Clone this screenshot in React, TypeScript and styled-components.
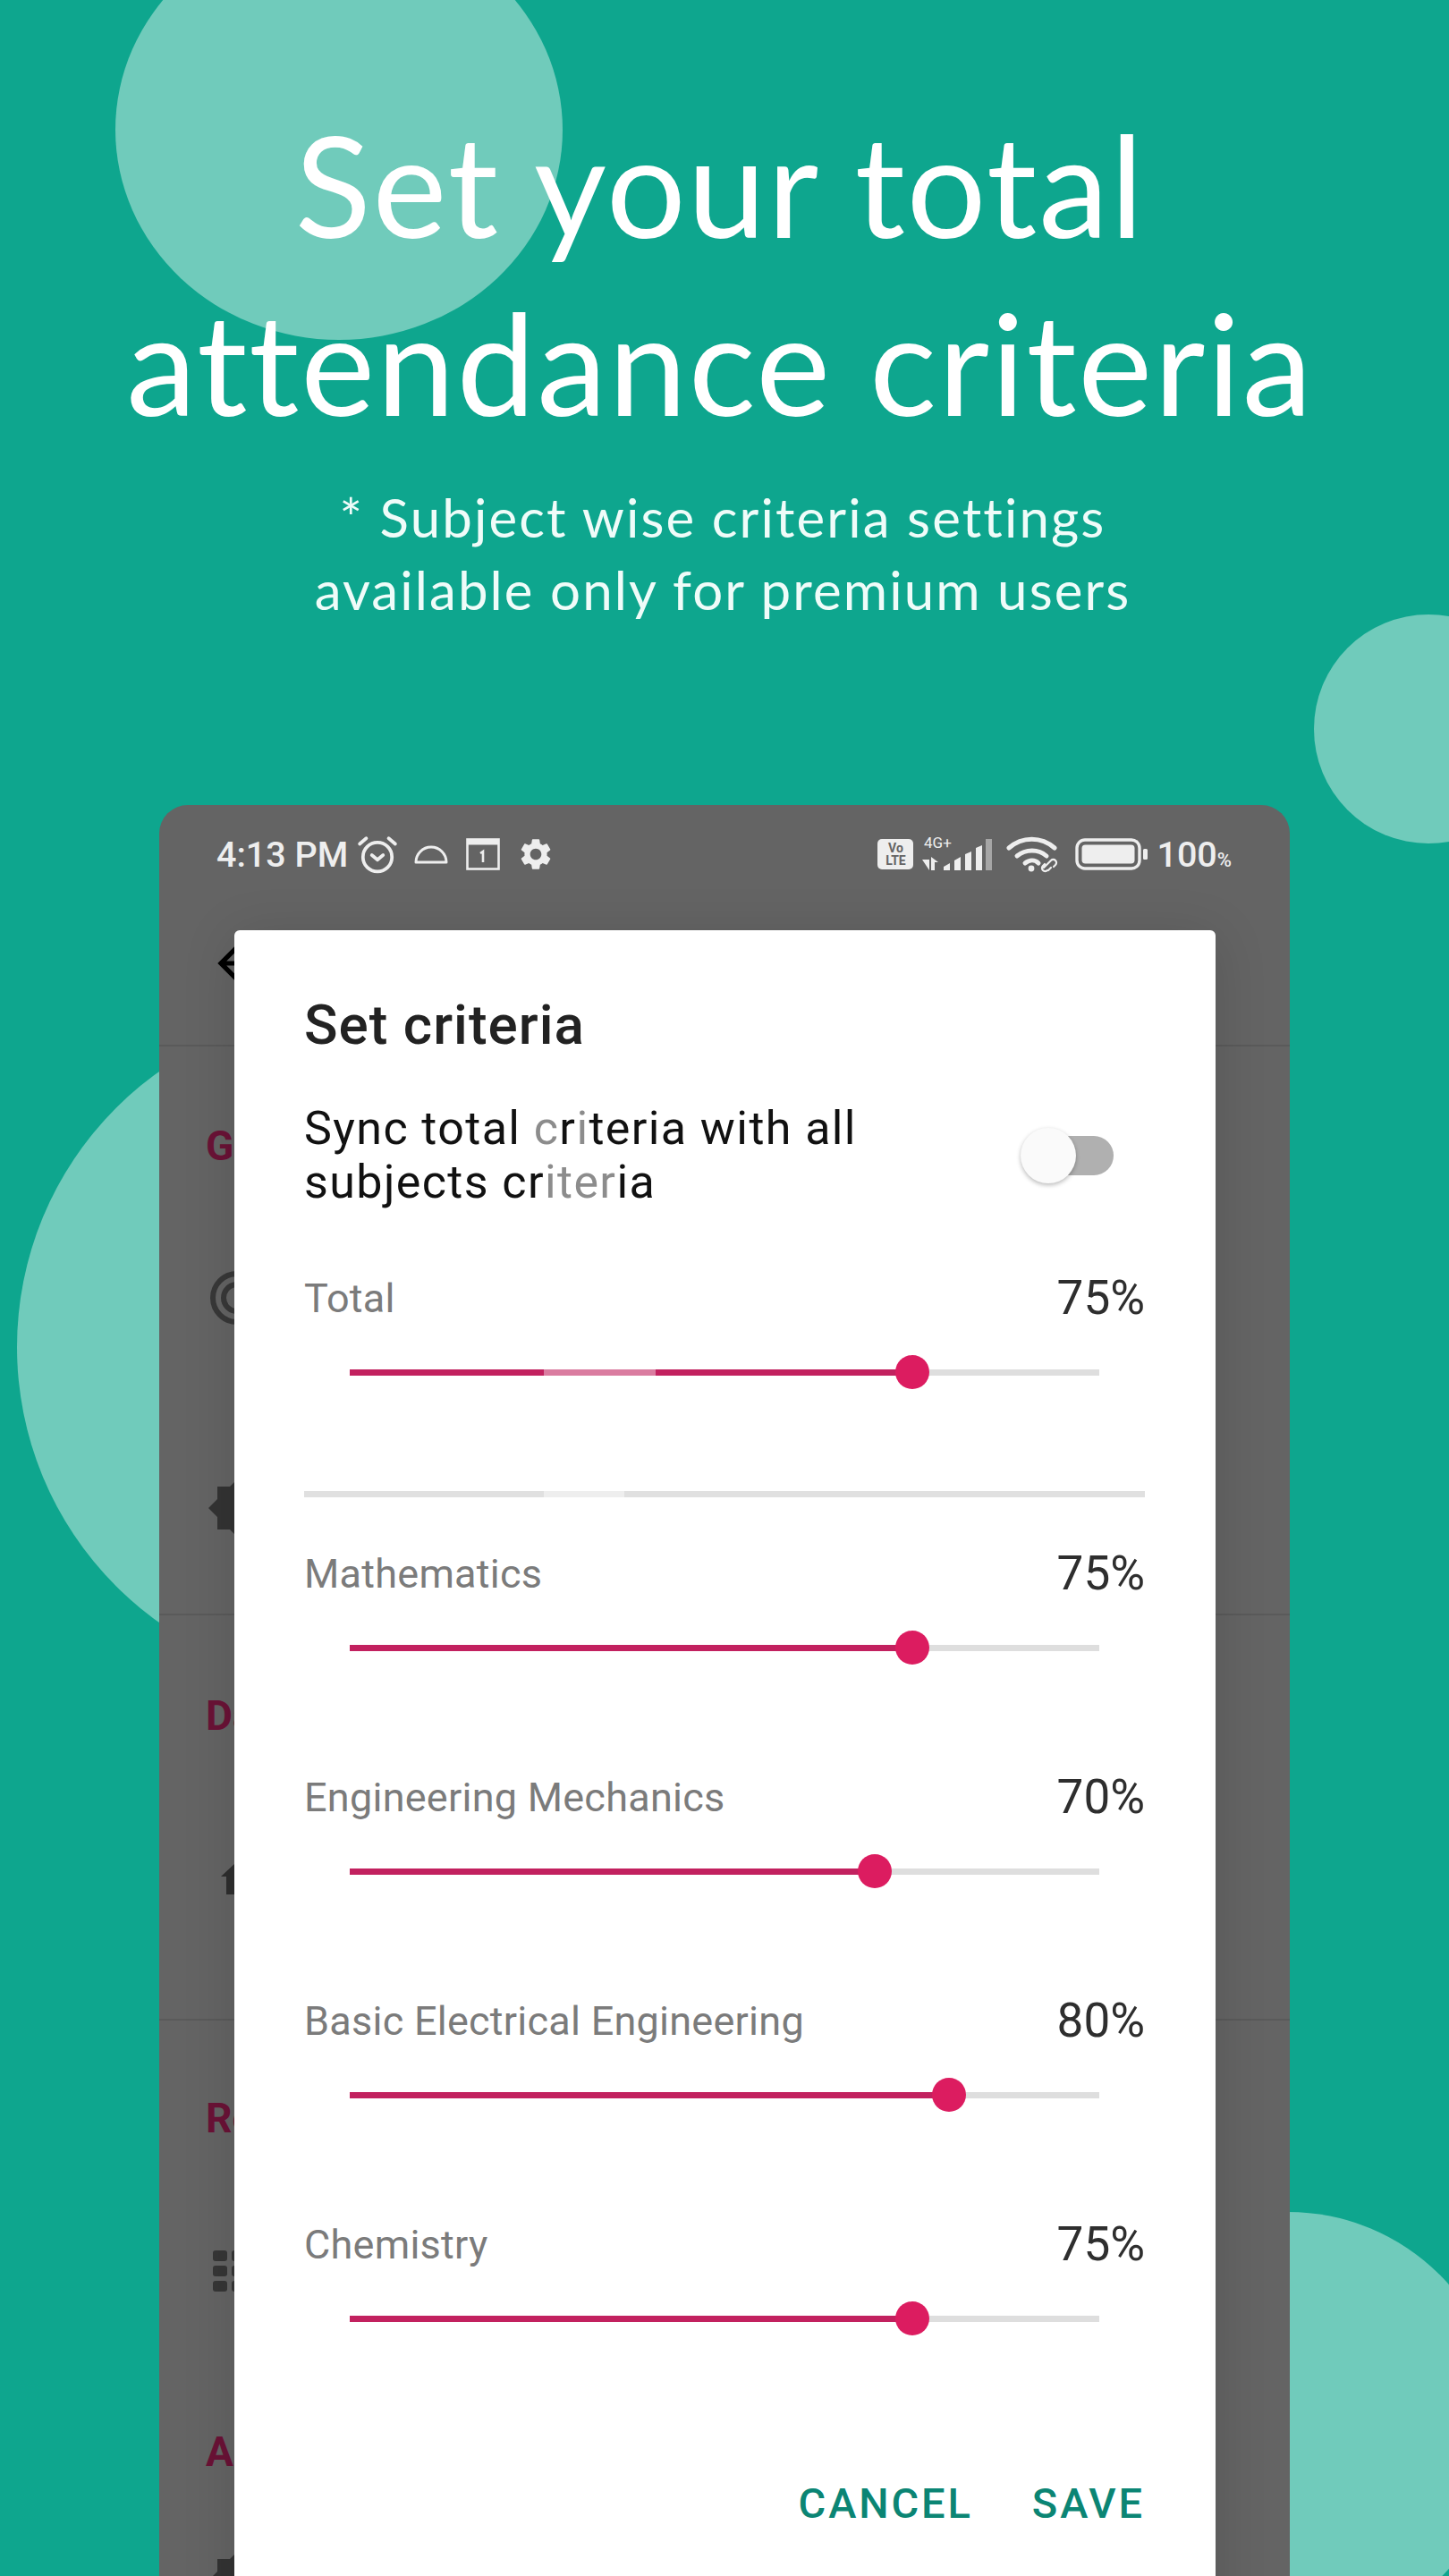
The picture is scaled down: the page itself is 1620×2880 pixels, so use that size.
import React from 'react';
import styled, { createGlobalStyle } from 'styled-components';
import { MdArrowBack, MdSettings } from 'react-icons/md';

const GlobalStyle = createGlobalStyle`
  html, body {
    margin: 0;
    padding: 0;
    background: #0ea68e;
  }
  * {
    box-sizing: border-box;
  }
`;

const Page = styled.div`
  position: relative;
  width: 1620px;
  height: 2880px;
  overflow: hidden;
  background: #0ea68e;
  font-family: Roboto, "Liberation Sans", sans-serif;
`;

const Blob = styled.div<{ $x: number; $y: number; $rx: number; $ry: number }>`
  position: absolute;
  left: ${p => p.$x - p.$rx}px;
  top: ${p => p.$y - p.$ry}px;
  width: ${p => p.$rx * 2}px;
  height: ${p => p.$ry * 2}px;
  border-radius: 50%;
  background: #70cbbb;
`;

const Hero = styled.header`
  position: relative;
  height: 900px;
  padding-top: 106px;
  text-align: center;
  color: #fff;
  font-family: Lato, "Open Sans", sans-serif;
`;

const Headline = styled.h1`
  margin: 0;
  font-size: 157px;
  line-height: 199px;
  font-weight: 400;
  letter-spacing: 1.9px;
  transform: translateX(-5px);
`;

const Subline = styled.p`
  margin: 34px 0 0;
  font-size: 60px;
  line-height: 81px;
  font-weight: 400;
  letter-spacing: 2.1px;
  color: #effcf9;
  transform: translateX(-2px);
`;

const Phone = styled.section`
  position: relative;
  width: 1264px;
  height: 2100px;
  margin-left: 178px;
  border-radius: 32px 32px 0 0;
  background: #646464;
  overflow: hidden;
`;

const StatusBar = styled.div`
  display: flex;
  align-items: center;
  justify-content: space-between;
  height: 110px;
  padding: 0 65px 0 64px;
  color: #eeeeee;
`;

const StatusGroup = styled.div`
  display: flex;
  align-items: center;
`;

const StatusGap = styled.span<{ $width: number }>`
  width: ${p => p.$width}px;
`;

const Clock = styled.span`
  font-size: 39.5px;
  font-weight: 500;
  margin-right: 10px;
`;

const VoLte = styled.div`
  display: flex;
  flex-direction: column;
  align-items: center;
  justify-content: center;
  width: 40px;
  height: 34px;
  border-radius: 5px;
  background: #eeeeee;
  color: #646464;
  font-size: 14px;
  line-height: 14px;
  font-weight: 700;
`;

const Battery = styled.span`
  font-size: 39.5px;
  font-weight: 500;
  margin-left: 9px;
  small {
    font-size: 22px;
    font-weight: 500;
  }
`;

const Toolbar = styled.div`
  display: flex;
  align-items: center;
  height: 160px;
  padding: 0 0 24px 55px;
  color: #000;
  border-bottom: 2px solid #5a5a5a;
`;

const SettingsSection = styled.div<{ $height: number; $pad: number; $plain?: boolean }>`
  height: ${p => p.$height}px;
  padding: ${p => p.$pad}px 0 0 52px;
  border-bottom: ${p => (p.$plain ? 'none' : '2px solid #5a5a5a')};
`;

const SectionTitle = styled.div`
  height: 56px;
  font-size: 46px;
  line-height: 56px;
  font-weight: 700;
  color: #6a1236;
`;

const SettingRow = styled.div<{ $height: number; $top?: number }>`
  display: flex;
  align-items: center;
  height: ${p => p.$height}px;
  margin-top: ${p => p.$top ?? 0}px;
`;

const Dialog = styled.div`
  position: absolute;
  top: 140px;
  left: 84px;
  width: 1097px;
  height: 1990px;
  padding: 71px 79px 0 78px;
  border-radius: 6px;
  background: #fff;
  box-shadow: 0 8px 60px rgba(0, 0, 0, 0.14);
`;

const DialogTitle = styled.h2`
  margin: 0;
  font-size: 62px;
  line-height: 70px;
  font-weight: 500;
  letter-spacing: 1px;
  color: #222222;
`;

const SyncRow = styled.div`
  display: flex;
  align-items: center;
  justify-content: space-between;
  margin-top: 51px;
`;

const SyncText = styled.div`
  font-size: 52px;
  line-height: 60px;
  letter-spacing: 1.4px;
  color: #111111;
`;

const Faded = styled.span`
  color: #8c8c8c;
`;

const Switch = styled.div`
  position: relative;
  width: 85px;
  height: 44px;
  margin-right: 35px;
  border-radius: 22px;
  background: #b0b0b0;
`;

const SwitchThumb = styled.div`
  position: absolute;
  left: -19px;
  top: -9px;
  width: 62px;
  height: 62px;
  border-radius: 50%;
  background: #fafafa;
  box-shadow: 0 2px 5px rgba(0, 0, 0, 0.28);
`;

const CriteriaRow = styled.div<{ $gap: number }>`
  margin-top: ${p => p.$gap}px;
`;

const CriteriaHead = styled.div`
  display: flex;
  align-items: center;
  justify-content: space-between;
  height: 60px;
`;

const CriteriaName = styled.span`
  font-size: 45px;
  letter-spacing: 0.25px;
  color: #7b7b7b;
`;

const CriteriaValue = styled.span`
  font-size: 53px;
  color: #2e2e2e;
`;

const SliderBox = styled.div`
  display: flex;
  align-items: center;
  height: 50px;
  margin-top: 28px;
  padding: 0 51px;
`;

const Track = styled.div`
  position: relative;
  width: 100%;
  height: 7px;
  background: #dedede;
`;

const TrackFill = styled.div`
  height: 100%;
  background: #c2215f;
`;

const TrackGlitch = styled.div<{ $left: number; $width: number; $color: string }>`
  position: absolute;
  top: 0;
  left: ${p => p.$left}px;
  width: ${p => p.$width}px;
  height: 100%;
  background: ${p => p.$color};
`;

const Thumb = styled.div`
  position: absolute;
  top: 50%;
  width: 38px;
  height: 38px;
  border-radius: 50%;
  background: #dc1c60;
  transform: translate(-50%, -50%);
`;

const Divider = styled.div`
  position: relative;
  height: 7px;
  margin: 108px 0 55px;
  background: #e0e0e0;
`;

const Actions = styled.div`
  display: flex;
  justify-content: flex-end;
  gap: 66px;
  margin-top: 152px;
`;

const ActionButton = styled.span`
  font-size: 47px;
  line-height: 60px;
  font-weight: 500;
  letter-spacing: 2.9px;
  color: #0b8574;
`;

const subjects = [
  { name: 'Mathematics', value: 75 },
  { name: 'Engineering Mechanics', value: 70 },
  { name: 'Basic Electrical Engineering', value: 80 },
  { name: 'Chemistry', value: 75 },
];

const Slider: React.FC<{ value: number; glitch?: boolean }> = ({ value, glitch }) => (
  <SliderBox>
    <Track>
      <TrackFill style={{ width: `${value}%` }} />
      {glitch && <TrackGlitch $left={217} $width={125} $color="#da7ca0" />}
      <Thumb style={{ left: `${value}%` }} />
    </Track>
  </SliderBox>
);

const AlarmIcon = () => (
  <svg width="46" height="46" viewBox="0 0 44 44" fill="none" stroke="#eee" strokeWidth="3.6" strokeLinecap="round" strokeLinejoin="round">
    <circle cx="22" cy="25" r="15.5" />
    <path d="M16 23l6 5 6-5" />
    <path d="M3 11l7-6M41 11l-7-6" />
  </svg>
);

const DomeIcon = () => (
  <svg width="38" height="22" viewBox="0 0 38 22" fill="none" stroke="#eee" strokeWidth="3" strokeLinejoin="round">
    <path d="M2 20a17 17 0 0 1 34 0z" />
  </svg>
);

const CalendarIcon = () => (
  <svg width="38" height="36" viewBox="0 0 38 36" fill="none">
    <rect x="1.5" y="1.5" width="35" height="33" stroke="#eee" strokeWidth="2.6" />
    <rect x="1.5" y="1.5" width="35" height="6" fill="#eee" />
    <path d="M16 17l3-2v12" stroke="#eee" strokeWidth="2.6" />
  </svg>
);

const SignalIcon = () => (
  <svg width="80" height="40" viewBox="0 0 80 40" overflow="visible">
    <text x="2" y="13" fontFamily="Roboto, sans-serif" fontSize="17" fill="#eee">4G+</text>
    <path d="M0 26h8v12zM10 23l8 6h-4v9h-4zM24 34l7-4v8h-7zM36 27l7-4v15h-7zM48 20l7-3v21h-7zM60 13l7-3v28h-7z" fill="#eee" />
    <path d="M71 3h7v35h-7z" fill="#a6a6a6" />
  </svg>
);

const WifiIcon = () => (
  <svg width="60" height="42" viewBox="0 0 60 42" fill="none" stroke="#eee" strokeLinecap="round">
    <path d="M3 14c15-13 36-13 51 0" strokeWidth="5" />
    <path d="M12 23c10-8 24-8 33 0" strokeWidth="5" />
    <path d="M21 31c5-4 11-4 15 0" strokeWidth="5" />
    <circle cx="28" cy="37" r="3.4" fill="#eee" stroke="none" />
    <path d="M42 36l8-8a3.5 3.5 0 0 1 5 5l-2 2M46 39a3.5 3.5 0 0 1-5 0 3.5 3.5 0 0 1 0-5l2-2M50 36l-3 3" strokeWidth="2.2" />
  </svg>
);

const BatteryIcon = () => (
  <svg width="82" height="36" viewBox="0 0 82 36" fill="none">
    <rect x="2" y="2" width="70" height="32" rx="9" stroke="#eee" strokeWidth="3.4" />
    <rect x="7.5" y="7.5" width="59" height="21" rx="4" fill="#eee" />
    <rect x="76" y="12" width="5" height="12" rx="1.5" fill="#eee" />
  </svg>
);

const TargetIcon = () => (
  <svg width="60" height="60" viewBox="0 0 60 60" fill="none" stroke="#383838" strokeWidth="6" style={{ marginLeft: 5 }}>
    <circle cx="30" cy="30" r="27" />
    <circle cx="30" cy="30" r="15" />
  </svg>
);

const BadgeIcon = () => (
  <svg width="58" height="58" viewBox="0 0 58 58" fill="#333" style={{ marginLeft: 3 }}>
    <path d="M0 29L10 19V5H24L29 0L34 5H48V19L58 29L48 39V53H34L29 58L24 53H10V39Z" />
  </svg>
);

const GridIcon = () => (
  <svg width="56" height="46" viewBox="0 0 56 46" fill="#363636" style={{ marginLeft: 8 }}>
    {[0, 17, 34].map(y =>
      [0, 21, 42].map(x => <rect key={`${x}-${y}`} x={x} y={y} width="16" height="12" rx="3" />),
    )}
  </svg>
);

const UpIcon = () => (
  <svg width="30" height="34" viewBox="0 0 30 34" fill="#2e2e2e" style={{ marginLeft: 17 }}>
    <path d="M0 14L15 0h15v34H6V14z" />
  </svg>
);

const App: React.FC = () => (
  <Page>
    <GlobalStyle />
    <Blob $x={379} $y={145} $rx={250} $ry={235} />
    <Blob $x={1597} $y={815} $rx={128} $ry={128} />
    <Blob $x={397} $y={1506} $rx={378} $ry={378} />
    <Blob $x={1440} $y={2713} $rx={240} $ry={240} />
    <Hero>
      <Headline>
        Set your total
        <br />
        attendance criteria
      </Headline>
      <Subline>
        * Subject wise criteria settings
        <br />
        available only for premium users
      </Subline>
    </Hero>
    <Phone>
      <StatusBar>
        <StatusGroup>
          <Clock>4:13 PM</Clock>
          <AlarmIcon />
          <StatusGap $width={18} />
          <DomeIcon />
          <StatusGap $width={20} />
          <CalendarIcon />
          <StatusGap $width={19} />
          <MdSettings size={42} color="#eee" />
        </StatusGroup>
        <StatusGroup>
          <VoLte>
            <span>Vo</span>
            <span>LTE</span>
          </VoLte>
          <StatusGap $width={10} />
          <SignalIcon />
          <StatusGap $width={14} />
          <WifiIcon />
          <StatusGap $width={17} />
          <BatteryIcon />
          <Battery>
            100<small>%</small>
          </Battery>
        </StatusGroup>
      </StatusBar>
      <Toolbar>
        <MdArrowBack size={62} />
      </Toolbar>
      <SettingsSection $height={636} $pad={83}>
        <SectionTitle>Goal</SectionTitle>
        <SettingRow $height={284}>
          <TargetIcon />
        </SettingRow>
        <SettingRow $height={186}>
          <BadgeIcon />
        </SettingRow>
      </SettingsSection>
      <SettingsSection $height={453} $pad={84}>
        <SectionTitle>Data</SectionTitle>
        <SettingRow $height={310}>
          <UpIcon />
        </SettingRow>
      </SettingsSection>
      <SettingsSection $height={369} $pad={81} $plain>
        <SectionTitle>Reminders</SectionTitle>
        <SettingRow $height={178} $top={54}>
          <GridIcon />
        </SettingRow>
      </SettingsSection>
      <SettingsSection $height={300} $pad={85} $plain>
        <SectionTitle>About</SectionTitle>
        <SettingRow $height={232}>
          <BadgeIcon />
        </SettingRow>
      </SettingsSection>
      <Dialog>
        <DialogTitle>Set criteria</DialogTitle>
        <SyncRow>
          <SyncText>
            Sync total <Faded>c</Faded>r<Faded>i</Faded>teria with all
            <br />
            subjects cr<Faded>iter</Faded>ia
          </SyncText>
          <Switch>
            <SwitchThumb />
          </Switch>
        </SyncRow>
        <CriteriaRow $gap={69}>
          <CriteriaHead>
            <CriteriaName>Total</CriteriaName>
            <CriteriaValue>75%</CriteriaValue>
          </CriteriaHead>
          <Slider value={75} glitch />
        </CriteriaRow>
        <Divider>
          <TrackGlitch $left={268} $width={90} $color="#eeeeee" />
        </Divider>
        {subjects.map((subject, i) => (
          <CriteriaRow key={subject.name} $gap={i === 0 ? 0 : 112}>
            <CriteriaHead>
              <CriteriaName>{subject.name}</CriteriaName>
              <CriteriaValue>{subject.value}%</CriteriaValue>
            </CriteriaHead>
            <Slider value={subject.value} />
          </CriteriaRow>
        ))}
        <Actions>
          <ActionButton>CANCEL</ActionButton>
          <ActionButton>SAVE</ActionButton>
        </Actions>
      </Dialog>
    </Phone>
  </Page>
);

export default App;
